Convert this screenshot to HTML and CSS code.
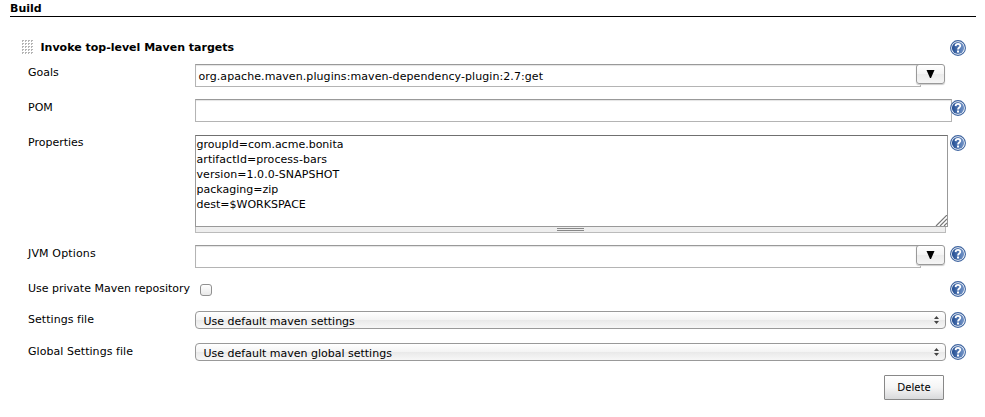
FILE: index.html
```html
<!DOCTYPE html>
<html lang="en">
<head>
<meta charset="utf-8">
<title>Build</title>
<link rel="stylesheet" href="styles.css">
</head>
<body>
<svg class="defs" width="0" height="0" aria-hidden="true">
  <defs>
    <linearGradient id="blue" x1="0" y1="0" x2="1" y2="0"><stop offset="0" stop-color="#234e93"/><stop offset="1" stop-color="#7495c8"/></linearGradient>
    <symbol id="help" viewBox="0 0 16 16">
      <circle cx="8" cy="8" r="7.4" fill="#fff" stroke="#3d639f" stroke-width="1.1"/>
      <circle cx="8" cy="8" r="6.1" fill="url(#blue)"/>
      <path d="M5.6 6.1C5.7 3.2 10.5 3.3 10.3 6C10.2 7.6 8.1 7.5 8 9.5" fill="none" stroke="#fff" stroke-width="1.8"/>
      <rect x="7" y="10.5" width="2" height="2" fill="#fff"/>
    </symbol>
  </defs>
</svg>
<main class="config">
  <h1 class="section">Build</h1>
  <div class="title-row">
    <svg class="grip" width="12" height="14"><defs><pattern id="dots" width="3" height="3" patternUnits="userSpaceOnUse"><path d="M0 0h2v1H1v1H0z" fill="#b4b4b4"/></pattern></defs><rect width="12" height="14" fill="url(#dots)"/></svg>
    <h2 class="title">Invoke top-level Maven targets</h2>
    <svg class="help"><use href="#help"/></svg>
  </div>
  <div class="row">
    <span class="label">Goals</span>
    <div class="field combo"><div class="input"><span class="value">org.apache.maven.plugins:maven-dependency-plugin:2.7:get</span></div><button class="drop"><svg width="9" height="8"><path d="M.5 0h8L5 8H4z"/></svg></button></div>
  </div>
  <div class="row pom">
    <span class="label">POM</span>
    <div class="field"><div class="input wide"></div></div>
    <svg class="help"><use href="#help"/></svg>
  </div>
  <div class="row properties">
    <span class="label">Properties</span>
    <div class="field">
      <div class="area"><span>groupId=com.acme.bonita</span><span class="artifact">artifactId=process-bars</span><span class="version">version=1.0.0-SNAPSHOT</span><span>packaging=zip</span><span>dest=$WORKSPACE</span><svg class="corner" width="12" height="11"><path d="M1 11L12 0M5 11l7-7M9 11l3-3" stroke="#777" stroke-width="1.2" fill="none"/></svg></div>
      <div class="handle"><i></i></div>
    </div>
    <svg class="help"><use href="#help"/></svg>
  </div>
  <div class="row">
    <span class="label jvm">JVM Options</span>
    <div class="field combo"><div class="input"></div><button class="drop"><svg width="9" height="8"><path d="M.5 0h8L5 8H4z"/></svg></button></div>
    <svg class="help"><use href="#help"/></svg>
  </div>
  <div class="row private">
    <span class="label">Use private Maven repository</span>
    <div class="field"><div class="check"></div></div>
    <svg class="help"><use href="#help"/></svg>
  </div>
  <div class="row settings">
    <span class="label file">Settings file</span>
    <div class="field"><div class="select"><span>Use default maven settings</span><svg width="5" height="8"><path d="M0 3L2.5 0 5 3zM0 5h5L2.5 8z" fill="#444"/></svg></div></div>
    <svg class="help"><use href="#help"/></svg>
  </div>
  <div class="row settings">
    <span class="label file">Global Settings file</span>
    <div class="field"><div class="select"><span>Use default maven global settings</span><svg width="5" height="8"><path d="M0 3L2.5 0 5 3zM0 5h5L2.5 8z" fill="#444"/></svg></div></div>
    <svg class="help"><use href="#help"/></svg>
  </div>
  <div class="actions"><button class="delete">Delete</button></div>
</main>
</body>
</html>
```
FILE: styles.css
```css
* { box-sizing: border-box; }
body { margin: 0; background: #fff; color: #000; font: 11px/15px Verdana, "DejaVu Sans", sans-serif; }
.defs { position: absolute; }
svg { display: block; }
.config { padding: 0 9px 0 10px; height: 417px; overflow: hidden; }
.section { margin: 0; height: 17px; padding-top: 2px; border-bottom: 1px solid #000; font-size: 11px; font-weight: bold; line-height: 14px; }
.title-row { display: flex; height: 47px; padding: 23px 10px 0 12px; }
.grip { margin-right: 6.5px; }
.title { flex: 1; margin: 0; font-size: 11px; font-weight: bold; }
.title-row .help { margin-top: 0; }
.help { width: 16px; height: 16px; margin-top: 1px; }
.row { display: grid; grid-template-columns: 167px 755px 16px; height: 35px; padding-left: 18px; }
.pom { height: 36px; }
.properties { height: 110px; }
.properties .help, .properties .label { margin-top: 0; padding-top: 0; }
.private { height: 31px; }
.settings { height: 32px; }
.label { white-space: nowrap; padding-top: 1px; }
.jvm { letter-spacing: .15px; }
.file { letter-spacing: .05px; }
.combo { display: flex; }
.input { width: 726px; height: 23px; padding: 4px 2.5px; border: 1px solid #b4b4b4; border-top-color: #999; box-shadow: inset 0 1px 1px #e4e4e4; white-space: nowrap; }
.input.wide { width: 757px; }
.value { letter-spacing: .08px; }
.drop { display: flex; align-items: center; justify-content: center; width: 29px; height: 20px; margin-left: -5px; padding: 0 0 1px; border: 1px solid #999; border-radius: 3px; background: linear-gradient(#fff, #f4f4f4 50%, #ebebeb 51%, #f5f5f5); box-shadow: 0 1px 1px #ccc; }
.area { position: relative; display: flex; flex-direction: column; width: 753px; height: 92px; padding: 1px .5px; border: 1px solid #999; border-top-color: #707070; }
.artifact, .version { letter-spacing: .06px; }
.corner { position: absolute; right: 0; bottom: 0; }
.handle { display: flex; justify-content: center; width: 751px; height: 6px; padding-top: 1px; background: #eee; border: 1px solid #bbb; border-top: 0; }
.handle i { width: 27px; height: 3px; border: solid #888; border-width: 1px 0; }
.check { width: 12px; height: 12px; margin: 4px 0 0 5px; border: 1px solid #909090; border-radius: 3px; background: linear-gradient(#fff, #e9e9e9); }
.select { display: flex; justify-content: space-between; width: 751px; height: 18px; padding: 2px 6px 0 7.5px; border: 1px solid #999; border-radius: 4px; background: linear-gradient(#fff, #f3f3f3 50%, #e9e9e9 51%, #f7f7f7); }
.select svg { margin-top: 2px; }
.actions { display: flex; justify-content: flex-end; padding-right: 32px; }
.delete { width: 60px; height: 25px; padding: 0 0 2px; border: 1px solid #888; border-radius: 1px; background: linear-gradient(#fff, #f5f5f5 50%, #d8d9db); color: #000; font: 11px/15px "Lucida Grande", "Noto Sans", sans-serif; }
```
